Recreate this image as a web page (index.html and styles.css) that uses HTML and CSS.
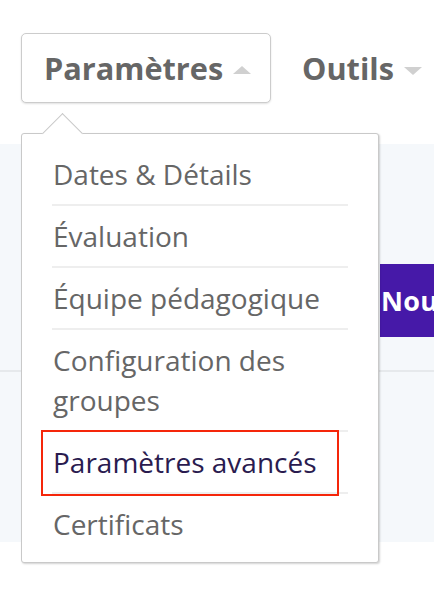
FILE: index.html
```html
<!DOCTYPE html>
<html lang="fr">
<head>
<meta charset="utf-8">
<link rel="stylesheet" href="styles.css">
</head>
<body>
<header class="toolbar">
  <div class="dropdown">
    <button class="btn btn-open" type="button">Paramètres <span class="caret caret-up"></span></button>
    <nav class="menu">
      <ul class="menu-list">
        <li class="menu-item">Dates &amp; Détails</li>
        <li class="menu-item">Évaluation</li>
        <li class="menu-item">Équipe pédagogique</li>
        <li class="menu-item">Configuration des groupes</li>
        <li class="menu-item menu-item-active">Paramètres avancés<span class="annotation"></span></li>
        <li class="menu-item">Certificats</li>
      </ul>
    </nav>
  </div>
  <button class="btn btn-plain" type="button">Outils <span class="caret caret-down"></span></button>
</header>
<main class="content">
  <section class="panel panel-top">
    <div class="panel-title"></div>
    <a class="primary" href="#">Nouveau</a>
  </section>
  <section class="panel panel-bottom"></section>
</main>
</body>
</html>
```
FILE: styles.css
```css
* { box-sizing: border-box; }
html, body { margin: 0; padding: 0; }
body {
  width: 434px;
  height: 610px;
  overflow: hidden;
  background: #fff;
  font-family: "Open Sans", "DejaVu Sans", sans-serif;
  color: #666;
}
.toolbar {
  height: 144px;
  display: flex;
  align-items: flex-start;
  padding: 33px 0 0 21px;
  gap: 8px;
  position: relative;
  z-index: 2;
}
.dropdown { position: relative; }
.btn {
  font-family: "Open Sans", "DejaVu Sans", sans-serif;
  font-weight: 700;
  font-size: 30.7px;
  color: #666;
  background: #fff;
  height: 70px;
  padding: 0 21px 0 22px;
  display: flex;
  align-items: center;
  gap: 10px;
  white-space: nowrap;
  cursor: pointer;
}
.btn-open {
  width: 250px;
  border: 1px solid #cccccc;
  border-radius: 5px;
  box-shadow: 0 1px 2px rgba(0,0,0,0.12);
}
.btn-plain {
  border: 1px solid transparent;
  background: transparent;
}
.caret {
  width: 0;
  height: 0;
  border-left: 9px solid transparent;
  border-right: 9px solid transparent;
  margin-top: 4px;
}
.caret-up { border-bottom: 8px solid #d0d0d0; }
.caret-down { border-top: 8px solid #d0d0d0; margin-top: 6px; }

.menu {
  position: absolute;
  top: 100px;
  left: 0;
  width: 358px;
  background: #fff;
  border: 1px solid #c9c9c9;
  border-radius: 3px;
  box-shadow: 1px 1px 2px rgba(0,0,0,0.18);
  padding: 10px 30px 8px 30px;
}
.menu::before {
  content: "";
  position: absolute;
  left: 26px;
  top: -15px;
  width: 28px;
  height: 28px;
  background: #fff;
  border-top: 1px solid #c9c9c9;
  border-left: 1px solid #c9c9c9;
  transform: rotate(45deg);
}
.menu-list {
  list-style: none;
  margin: 0;
  padding: 0;
  position: relative;
}
.menu-item {
  position: relative;
  font-size: 28px;
  line-height: 40px;
  padding: 10px 0 10px 1px;
  border-bottom: 2px solid #eeeeee;
  color: #666;
}
.menu-item:last-child { border-bottom: none; }
.menu-item-active { color: #2a1b4f; }
.annotation {
  position: absolute;
  left: -11px;
  top: -2px;
  width: 298px;
  height: 66px;
  border: 2px solid #f5260a;
  pointer-events: none;
}

.content { position: relative; z-index: 1; }
.panel { background: #f5f8fb; }
.panel-top {
  height: 228px;
  border-bottom: 2px solid #e6e9ec;
  display: grid;
  grid-template-columns: 380px 54px;
  align-items: start;
  padding-top: 120px;
}
.primary {
  display: flex;
  align-items: center;
  height: 73px;
  background: #4619a8;
  color: #fff;
  font-weight: 700;
  font-size: 27px;
  text-decoration: none;
  padding-left: 1px;
  white-space: nowrap;
  overflow: hidden;
  letter-spacing: 0.3px;
}
.panel-bottom { height: 170px; }
```
